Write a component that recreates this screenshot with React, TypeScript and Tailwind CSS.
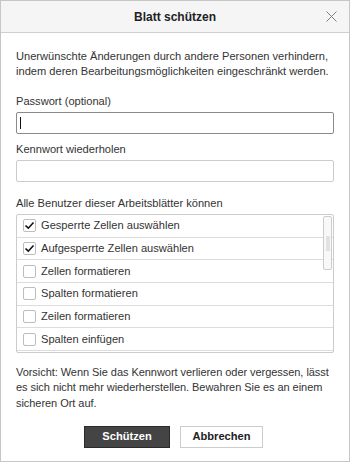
import React from "react";

const rows = [
  { label: "Gesperrte Zellen auswählen", checked: true },
  { label: "Aufgesperrte Zellen auswählen", checked: true },
  { label: "Zellen formatieren", checked: false },
  { label: "Spalten formatieren", checked: false },
  { label: "Zeilen formatieren", checked: false },
  { label: "Spalten einfügen", checked: false },
];

function Checkbox({ checked }: { checked: boolean }) {
  return (
    <span className="flex h-[13px] w-[13px] shrink-0 items-center justify-center rounded-[2px] border border-[#bdbdbd] bg-white">
      {checked && (
        <svg width="11" height="11" viewBox="0 0 11 11">
          <polyline points="1.5,5.5 4.3,8.2 9.5,2.5" fill="none" stroke="#111" strokeWidth="1.6" />
        </svg>
      )}
    </span>
  );
}

export default function App() {
  return (
    <div
      className="h-[464px] w-[350px] bg-white text-[11.1px] text-[#333]"
      style={{ fontFamily: '"Liberation Sans", Arial, sans-serif' }}
    >
      <div className="flex h-[462px] w-[350px] flex-col border border-[#c6c6c6]">
        {/* header */}
        <div className="relative flex h-[32px] shrink-0 items-center justify-center border-b border-[#cfcfcf] bg-[#f5f5f5]">
          <span className="text-[12px] font-bold text-[#222]">Blatt schützen</span>
          <svg className="absolute left-[325px] top-[10px]" width="11" height="11" viewBox="0 0 11 11">
            <path d="M0.5 0.5 L10.5 10.5 M10.5 0.5 L0.5 10.5" stroke="#808080" strokeWidth="1" />
          </svg>
        </div>

        <div className="flex flex-col px-[15px] leading-[15px]">
          <p className="mt-[16px]">
            Unerwünschte Änderungen durch andere Personen verhindern, indem deren Bearbeitungsmöglichkeiten eingeschränkt werden.
          </p>

          <label className="mt-[15px]">Passwort (optional)</label>
          <div className="mt-[3px] flex h-[22px] items-center rounded-[2px] border border-[#8a8a8a] px-[3px]">
            <span className="h-[12px] w-px bg-[#111]" />
          </div>

          <label className="mt-[8px]">Kennwort wiederholen</label>
          <div className="mt-[3px] h-[22px] rounded-[2px] border border-[#cccccc]" />

          <label className="mt-[14px]">Alle Benutzer dieser Arbeitsblätter können</label>
          <div className="relative mt-[3px] h-[139px] overflow-hidden rounded-[2px] border border-[#cccccc]">
            {rows.map((r) => (
              <div key={r.label} className="flex h-[22.67px] items-center gap-[5px] border-b border-[#dcdcdc] pl-[6px]">
                <Checkbox checked={r.checked} />
                <span>{r.label}</span>
              </div>
            ))}
            <div className="absolute right-[1px] top-[1px] flex h-[54px] w-[9px] items-center justify-center rounded-[2px] border border-[#cccccc] bg-[#f8f8f8]">
              <span className="h-[15px] w-[4px] bg-[#e2e2e2]" />
            </div>
          </div>

          <p className="mt-[12px] -mr-[2px] text-[11px] leading-[15.3px] tracking-[-0.05px]">
            Vorsicht: Wenn Sie das Kennwort verlieren oder vergessen, lässt es sich nicht mehr wiederherstellen. Bewahren Sie es an einem sicheren Ort auf.
          </p>

          <div className="mt-[15px] flex gap-[10px] pl-[68px]">
            <button className="h-[22px] w-[86px] border border-[#2a2a2a] bg-[#444444] font-bold text-white">
              Schützen
            </button>
            <button className="h-[22px] w-[83px] border border-[#cccccc] bg-white font-bold text-[#222]">
              Abbrechen
            </button>
          </div>
        </div>
      </div>
    </div>
  );
}
